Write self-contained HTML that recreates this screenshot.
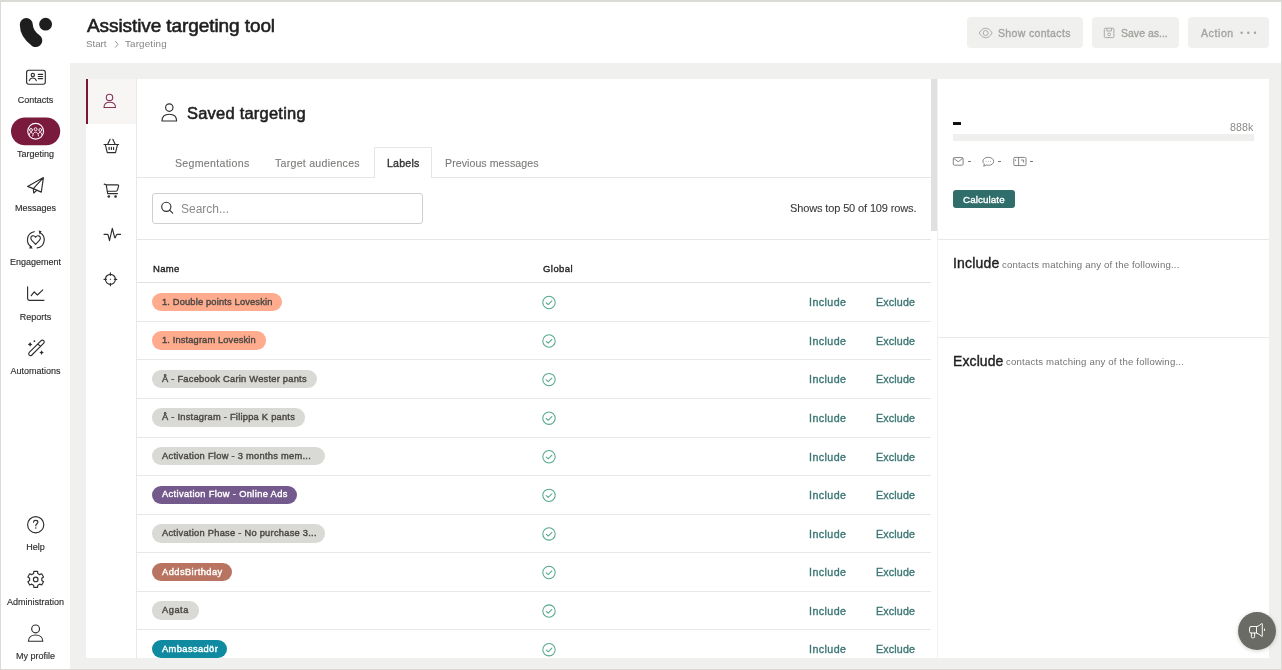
<!DOCTYPE html>
<html><head><meta charset="utf-8"><style>
*{box-sizing:border-box;margin:0;padding:0}
html,body{width:1282px;height:670px;overflow:hidden;background:#fff;font-family:"Liberation Sans",sans-serif;color:#222}
.a{position:absolute}
.t{position:absolute;white-space:nowrap;line-height:1;will-change:transform}
svg{position:absolute;overflow:visible}
.ic{fill:none;stroke:#2e2e2e;stroke-width:1.15;stroke-linecap:round;stroke-linejoin:round}
</style></head><body>
<div class="a" style="left:0;top:0;width:1282px;height:670px;border:1px solid #ddd9d4"></div>
<div class="a" style="left:1px;top:1px;width:1280px;height:1px;background:#d9d9d7"></div>
<div class="a" style="left:70px;top:63px;width:1211px;height:606px;background:#f0f0ee"></div>
<div class="a" style="left:86px;top:79px;width:1183px;height:579px;background:#fff"></div>
<svg style="left:0;top:0" width="70" height="62"><path d="M26.3,24.6 C26.3,31 30,36.5 35.8,40.6" fill="none" stroke="#1e1e1e" stroke-width="13" stroke-linecap="round"/><circle cx="45.6" cy="24.2" r="6.4" fill="#1e1e1e"/></svg>
<div class="t" style="left:86.60px;top:15.72px;font-size:19px;font-weight:400;color:#1f1f1f;letter-spacing:-0.087px;-webkit-text-stroke:0.6px #1f1f1f;">Assistive targeting tool</div>
<div class="t" style="left:86.00px;top:39.00px;font-size:9.8px;font-weight:400;color:#858583;letter-spacing:-0.050px;">Start</div>
<svg style="left:0;top:0" width="1" height="1"><path d="M115.2,41 L118,44.3 L115.2,47.6" fill="none" stroke="#8a8a88" stroke-width="0.9"/></svg>
<div class="t" style="left:125.10px;top:39.10px;font-size:9.8px;font-weight:400;color:#858583;letter-spacing:0.162px;">Targeting</div>
<div class="a" style="left:967px;top:17px;width:116px;height:31px;background:#f0f0ee;border-radius:4px"></div>
<div class="a" style="left:1092px;top:17px;width:87px;height:31px;background:#f0f0ee;border-radius:4px"></div>
<div class="a" style="left:1188px;top:17px;width:80.5px;height:31px;background:#f0f0ee;border-radius:4px"></div>
<div class="t" style="left:998.20px;top:27.61px;font-size:10.5px;font-weight:400;color:#a3a3a0;letter-spacing:0.342px;-webkit-text-stroke:0.35px #a3a3a0;">Show contacts</div>
<div class="t" style="left:1120.90px;top:27.61px;font-size:10.5px;font-weight:400;color:#a3a3a0;letter-spacing:0.011px;-webkit-text-stroke:0.35px #a3a3a0;">Save as...</div>
<div class="t" style="left:1201.00px;top:27.61px;font-size:10.5px;font-weight:400;color:#a3a3a0;letter-spacing:0.600px;-webkit-text-stroke:0.35px #a3a3a0;">Action</div>
<svg style="left:0;top:0" width="1" height="1"><path d="M979.3,33 C981,29.8 983.2,28.3 985.7,28.3 C988.2,28.3 990.4,29.8 992.1,33 C990.4,36.2 988.2,37.7 985.7,37.7 C983.2,37.7 981,36.2 979.3,33 Z" fill="none" stroke="#a3a3a0" stroke-width="0.9"/><circle cx="985.7" cy="33" r="2.5" fill="none" stroke="#a3a3a0" stroke-width="0.9"/></svg>
<svg style="left:0;top:0" width="1" height="1"><rect x="1104.3" y="28.2" width="9.6" height="9.4" rx="1" fill="none" stroke="#a3a3a0" stroke-width="0.9"/><path d="M1106.8,28.2 V31 H1111.4 V28.2" fill="none" stroke="#a3a3a0" stroke-width="0.9"/><circle cx="1109.1" cy="34.4" r="1.4" fill="none" stroke="#a3a3a0" stroke-width="0.9"/></svg>
<svg style="left:0;top:0" width="1" height="1"><circle cx="1241.6" cy="32.8" r="1.2" fill="#a3a3a0"/><circle cx="1248.3" cy="32.8" r="1.2" fill="#a3a3a0"/><circle cx="1255" cy="32.8" r="1.2" fill="#a3a3a0"/></svg>
<svg style="left:0;top:0" width="1" height="1"><rect x="26.6" y="70.2" width="18.7" height="14" rx="2.2" class="ic" stroke-width="1.2"/><circle cx="32.8" cy="75" r="1.65" class="ic" stroke-width="1.1"/><path d="M29.3,80.6 C29.9,78.9 31.2,78 32.8,78 C34.4,78 35.7,78.9 36.3,80.6" class="ic" stroke-width="1.1"/><path d="M38.3,74.4 H42.6 M38.3,76.5 H42.6 M38.3,78.6 H42.6" class="ic" stroke-width="1.0"/><rect x="11" y="117.4" width="49.2" height="27.9" rx="13.95" fill="#7a1b3e"/><circle cx="35.65" cy="131.25" r="7.9" fill="none" stroke="#fff" stroke-width="1.1"/><circle cx="31.0" cy="130.0" r="1.45" fill="none" stroke="#fff" stroke-width="0.95"/><circle cx="35.6" cy="129.2" r="1.45" fill="none" stroke="#fff" stroke-width="0.95"/><circle cx="40.3" cy="130.0" r="1.45" fill="none" stroke="#fff" stroke-width="0.95"/><path d="M29.2,135.4 C29.3,133.3 30,132.5 31.1,132.5 C31.9,132.5 32.5,132.9 32.8,133.6 M38.4,133.6 C38.7,132.9 39.3,132.5 40.2,132.5 C41.2,132.5 41.9,133.3 42,135.4 M32.7,136.4 C32.9,133.7 34,132.2 35.6,132.2 C37.2,132.2 38.3,133.7 38.5,136.4" fill="none" stroke="#fff" stroke-width="0.95"/><path d="M43.4,177.6 L27.6,186.4 L33.3,188.6 L41.3,192.1 Z M43.4,177.6 L33.3,188.6 L33.7,193 L36.8,190.4" class="ic" stroke-width="1.2"/><path d="M34.3,231.7 A8.2,8.2 0 0 0 31.6,246.9" class="ic" stroke-width="1.15"/><path d="M37.2,247.9 A8.2,8.2 0 0 0 40.1,232.7" class="ic" stroke-width="1.15"/><path d="M30.2,245.2 L32.8,248.4 L29.2,248.6 Z" fill="#2e2e2e"/><path d="M38.6,230.6 L41.6,231.3 L39.6,234.4 Z" fill="#2e2e2e"/><path d="M35.6,244.3 L31.8,240.4 C30.3,238.9 30.5,236.5 32.3,235.9 C33.7,235.4 34.9,236.2 35.6,237.3 C36.3,236.2 37.5,235.4 38.9,235.9 C40.7,236.5 40.9,238.9 39.4,240.4 Z" class="ic" stroke-width="1.15"/><path d="M27.6,286.8 V298.6 Q27.6,300.3 29.3,300.3 H44" class="ic" stroke-width="1.2"/><path d="M31.2,295.6 L34.2,291.8 L37.4,295 L42.8,289.9" class="ic" stroke-width="1.2"/><path d="M29.3,352.4 L40.9,340.8 Q42.3,339.4 43.6,340.7 Q44.9,342 43.5,343.4 L31.9,355 Q30.5,356.4 29.2,355.1 Q27.9,353.8 29.3,352.4 Z M37.8,343.9 L40.4,346.5" class="ic" stroke-width="1.1"/><path d="M30.1,342.09999999999997 Q30.6,343.9 32.4,344.4 Q30.6,344.9 30.1,346.7 Q29.6,344.9 27.8,344.4 Q29.6,343.9 30.1,342.09999999999997 Z M41.6,350.3 Q42.1,352.1 43.9,352.6 Q42.1,353.1 41.6,354.90000000000003 Q41.1,353.1 39.300000000000004,352.6 Q41.1,352.1 41.6,350.3 Z" fill="#2e2e2e"/><circle cx="34.4" cy="341.2" r="0.85" fill="#2e2e2e"/><circle cx="35.7" cy="524.7" r="8.1" class="ic" stroke-width="1.2"/><path d="M33.5,522.2 C33.6,520.9 34.5,520.3 35.7,520.3 C36.9,520.3 37.9,521 37.9,522.1 C37.9,523.6 35.8,524 35.8,525.8" class="ic" stroke-width="1.2"/><circle cx="35.8" cy="528.1" r="0.75" fill="#2e2e2e"/><path d="M33.86,571.41 L37.54,571.41 L37.82,573.57 L39.69,574.65 L41.70,573.81 L43.54,577.00 L41.81,578.32 L41.81,580.48 L43.54,581.80 L41.70,584.99 L39.69,584.15 L37.82,585.23 L37.54,587.39 L33.86,587.39 L33.58,585.23 L31.71,584.15 L29.70,584.99 L27.86,581.80 L29.59,580.48 L29.59,578.32 L27.86,577.00 L29.70,573.81 L31.71,574.65 L33.58,573.57 Z" class="ic" stroke-width="1.15"/><circle cx="35.7" cy="579.4" r="2.3" class="ic" stroke-width="1.15"/><circle cx="35.6" cy="628.9" r="3.9" class="ic" stroke-width="1.2"/><path d="M28.4,641.2 C28.4,637.3 31.5,635 35.6,635 C39.7,635 42.8,637.3 42.8,641.2 Z" class="ic" stroke-width="1.2"/></svg>
<div class="t" style="left:0;width:71px;text-align:center;top:95.88px;font-size:9px;color:#2e2e2e;-webkit-text-stroke:0.15px #2e2e2e">Contacts</div>
<div class="t" style="left:0;width:71px;text-align:center;top:150.08px;font-size:9px;color:#2e2e2e;-webkit-text-stroke:0.15px #2e2e2e">Targeting</div>
<div class="t" style="left:0;width:71px;text-align:center;top:204.28px;font-size:9px;color:#2e2e2e;-webkit-text-stroke:0.15px #2e2e2e">Messages</div>
<div class="t" style="left:0;width:71px;text-align:center;top:258.48px;font-size:9px;color:#2e2e2e;-webkit-text-stroke:0.15px #2e2e2e">Engagement</div>
<div class="t" style="left:0;width:71px;text-align:center;top:312.68px;font-size:9px;color:#2e2e2e;-webkit-text-stroke:0.15px #2e2e2e">Reports</div>
<div class="t" style="left:0;width:71px;text-align:center;top:366.68px;font-size:9px;color:#2e2e2e;-webkit-text-stroke:0.15px #2e2e2e">Automations</div>
<div class="t" style="left:0;width:71px;text-align:center;top:543.38px;font-size:9px;color:#2e2e2e;-webkit-text-stroke:0.15px #2e2e2e">Help</div>
<div class="t" style="left:0;width:71px;text-align:center;top:597.78px;font-size:9px;color:#2e2e2e;-webkit-text-stroke:0.15px #2e2e2e">Administration</div>
<div class="t" style="left:0;width:71px;text-align:center;top:652.08px;font-size:9px;color:#2e2e2e;-webkit-text-stroke:0.15px #2e2e2e">My profile</div>
<div class="a" style="left:136px;top:79px;width:1px;height:579px;background:#e9e9e7"></div>
<div class="a" style="left:88px;top:79px;width:48px;height:45px;background:#f7f6f4"></div>
<div class="a" style="left:86px;top:79px;width:2.4px;height:45px;background:#78163c"></div>
<svg style="left:0;top:0" width="1" height="1"><circle cx="109.5" cy="97.4" r="3.2" fill="none" stroke="#86345a" stroke-width="1.1"/><path d="M104,107.5 C104,104 106.3,102.3 109.7,102.3 C113.1,102.3 115.5,104 115.5,107.5 Z" fill="none" stroke="#86345a" stroke-width="1.1" stroke-linejoin="round"/><path d="M104,144.5 H118.6 M105.3,144.6 L107.3,152.6 H115.5 L117.5,144.6 M107.6,144.4 L110.1,139.3 M115.3,144.4 L112.8,139.3 M109.1,147.3 V149.5 M111.4,147.3 V149.5 M113.6,147.3 V149.5" class="ic" stroke-width="1.1"/><path d="M104.2,184.1 L106.2,184.8 L107.7,193.6 H117.5 M106.3,184.9 H117.6 Q118.9,184.9 118.6,186.2 L117.4,190.2 Q117.1,191.2 116.1,191.2 H107.2" class="ic" stroke-width="1.1"/><circle cx="108.8" cy="196.5" r="1.35" fill="#333"/><circle cx="115.6" cy="196.5" r="1.35" fill="#333"/><path d="M104,234.3 H107.3 Q107.9,234.3 108.1,235 L109.5,240.6 L112.3,228.4 L114.7,237.5 Q115.1,238.4 115.7,236.7 Q116.2,234.3 117.3,234.3 H120.6" class="ic" stroke-width="1.15"/><circle cx="110.4" cy="279.3" r="5" class="ic" stroke-width="1.1"/><path d="M110.4,272.9 V275.3 M110.4,283.3 V285.7 M104,279.3 H106.4 M114.4,279.3 H116.8" class="ic" stroke-width="1.1"/><circle cx="110.4" cy="279.3" r="0.6" fill="#333"/></svg>
<svg style="left:0;top:0" width="1" height="1"><circle cx="169.3" cy="107.6" r="3.7" class="ic" stroke-width="1.15"/><path d="M162,121 C162,116.6 165,114.2 169.3,114.2 C173.6,114.2 176.6,116.6 176.6,121 Z" class="ic" stroke-width="1.15"/></svg>
<div class="t" style="left:186.90px;top:105.43px;font-size:16.5px;font-weight:400;color:#1f1f1f;letter-spacing:0.214px;-webkit-text-stroke:0.55px #1f1f1f;">Saved targeting</div>
<div class="a" style="left:137px;top:177px;width:794px;height:1px;background:#e6e6e4"></div>
<div class="a" style="left:374px;top:147px;width:58px;height:31px;background:#fff;border:1px solid #e6e6e4;border-bottom:none"></div>
<div class="t" style="left:175.00px;top:158.13px;font-size:10.6px;font-weight:400;color:#7a7a78;letter-spacing:0.292px;-webkit-text-stroke:0.1px #7a7a78;">Segmentations</div>
<div class="t" style="left:275.30px;top:158.13px;font-size:10.6px;font-weight:400;color:#7a7a78;letter-spacing:0.260px;-webkit-text-stroke:0.1px #7a7a78;">Target audiences</div>
<div class="t" style="left:386.70px;top:158.13px;font-size:10.6px;font-weight:400;color:#333;letter-spacing:0.220px;-webkit-text-stroke:0.35px #333;">Labels</div>
<div class="t" style="left:445.40px;top:158.13px;font-size:10.6px;font-weight:400;color:#7a7a78;letter-spacing:0.062px;-webkit-text-stroke:0.1px #7a7a78;">Previous messages</div>
<div class="a" style="left:152px;top:193px;width:271px;height:31px;border:1px solid #cfcfcc;border-radius:3px"></div>
<svg style="left:0;top:0" width="1" height="1"><circle cx="166.3" cy="206.8" r="4.6" class="ic" stroke-width="1.15"/><path d="M169.6,210.1 L172.7,213.2" class="ic" stroke-width="1.15"/></svg>
<div class="t" style="left:181.20px;top:202.94px;font-size:12px;font-weight:400;color:#8a8a88;letter-spacing:0.000px;">Search...</div>
<div class="t" style="left:789.60px;top:203.19px;font-size:11px;font-weight:400;color:#3a3a3a;letter-spacing:-0.129px;-webkit-text-stroke:0.1px #3a3a3a;">Shows top 50 of 109 rows.</div>
<div class="a" style="left:931px;top:79px;width:6px;height:152px;background:#e0e0df"></div>
<div class="a" style="left:937px;top:79px;width:1px;height:579px;background:#f0f0ee"></div>
<div class="a" style="left:137px;top:239px;width:794px;height:1px;background:#e6e6e4"></div>
<div class="t" style="left:152.80px;top:264.26px;font-size:9.5px;font-weight:400;color:#222;letter-spacing:0.300px;-webkit-text-stroke:0.35px #222;">Name</div>
<div class="t" style="left:542.80px;top:264.26px;font-size:9.5px;font-weight:400;color:#222;letter-spacing:0.440px;-webkit-text-stroke:0.35px #222;">Global</div>
<div class="a" style="left:137px;top:282px;width:794px;height:1px;background:#e2e2e0"></div>
<div class="a" style="left:152.2px;top:292.60px;width:129.60px;height:18.5px;border-radius:9.25px;background:#ffab8e"></div>
<div class="t" style="left:162.20px;top:297.58px;font-size:9.3px;font-weight:400;color:#4b4843;letter-spacing:0.163px;-webkit-text-stroke:0.4px #4b4843;">1. Double points Loveskin</div>
<svg style="left:0;top:0" width="1" height="1"><circle cx="549" cy="302.45" r="6.2" fill="none" stroke="#55a88e" stroke-width="1.05"/><path d="M546.2,302.75 L548.2,304.55 L551.9,300.85" fill="none" stroke="#55a88e" stroke-width="1.05" stroke-linecap="round" stroke-linejoin="round"/></svg>
<div class="t" style="left:808.60px;top:297.19px;font-size:10.7px;font-weight:400;color:#3b7673;letter-spacing:0.433px;-webkit-text-stroke:0.35px #3b7673;">Include</div>
<div class="t" style="left:875.80px;top:297.19px;font-size:10.7px;font-weight:400;color:#3b7673;letter-spacing:0.150px;-webkit-text-stroke:0.35px #3b7673;">Exclude</div>
<div class="a" style="left:137px;top:321px;width:794px;height:1px;background:#e8e8e6"></div>
<div class="a" style="left:152.2px;top:331.18px;width:113.70px;height:18.5px;border-radius:9.25px;background:#ffab8e"></div>
<div class="t" style="left:162.20px;top:336.16px;font-size:9.3px;font-weight:400;color:#4b4843;letter-spacing:0.135px;-webkit-text-stroke:0.4px #4b4843;">1. Instagram Loveskin</div>
<svg style="left:0;top:0" width="1" height="1"><circle cx="549" cy="341.03" r="6.2" fill="none" stroke="#55a88e" stroke-width="1.05"/><path d="M546.2,341.33 L548.2,343.13 L551.9,339.43" fill="none" stroke="#55a88e" stroke-width="1.05" stroke-linecap="round" stroke-linejoin="round"/></svg>
<div class="t" style="left:808.60px;top:335.77px;font-size:10.7px;font-weight:400;color:#3b7673;letter-spacing:0.433px;-webkit-text-stroke:0.35px #3b7673;">Include</div>
<div class="t" style="left:875.80px;top:335.77px;font-size:10.7px;font-weight:400;color:#3b7673;letter-spacing:0.150px;-webkit-text-stroke:0.35px #3b7673;">Exclude</div>
<div class="a" style="left:137px;top:359px;width:794px;height:1px;background:#e8e8e6"></div>
<div class="a" style="left:152.2px;top:369.76px;width:164.70px;height:18.5px;border-radius:9.25px;background:#d9d9d5"></div>
<div class="t" style="left:162.20px;top:374.74px;font-size:9.3px;font-weight:400;color:#4b4843;letter-spacing:0.243px;-webkit-text-stroke:0.4px #4b4843;">Å - Facebook Carin Wester pants</div>
<svg style="left:0;top:0" width="1" height="1"><circle cx="549" cy="379.61" r="6.2" fill="none" stroke="#55a88e" stroke-width="1.05"/><path d="M546.2,379.91 L548.2,381.71 L551.9,378.01" fill="none" stroke="#55a88e" stroke-width="1.05" stroke-linecap="round" stroke-linejoin="round"/></svg>
<div class="t" style="left:808.60px;top:374.35px;font-size:10.7px;font-weight:400;color:#3b7673;letter-spacing:0.433px;-webkit-text-stroke:0.35px #3b7673;">Include</div>
<div class="t" style="left:875.80px;top:374.35px;font-size:10.7px;font-weight:400;color:#3b7673;letter-spacing:0.150px;-webkit-text-stroke:0.35px #3b7673;">Exclude</div>
<div class="a" style="left:137px;top:398px;width:794px;height:1px;background:#e8e8e6"></div>
<div class="a" style="left:152.2px;top:408.34px;width:152.60px;height:18.5px;border-radius:9.25px;background:#d9d9d5"></div>
<div class="t" style="left:162.20px;top:413.32px;font-size:9.3px;font-weight:400;color:#4b4843;letter-spacing:0.243px;-webkit-text-stroke:0.4px #4b4843;">Å - Instagram - Filippa K pants</div>
<svg style="left:0;top:0" width="1" height="1"><circle cx="549" cy="418.19" r="6.2" fill="none" stroke="#55a88e" stroke-width="1.05"/><path d="M546.2,418.49 L548.2,420.29 L551.9,416.59" fill="none" stroke="#55a88e" stroke-width="1.05" stroke-linecap="round" stroke-linejoin="round"/></svg>
<div class="t" style="left:808.60px;top:412.93px;font-size:10.7px;font-weight:400;color:#3b7673;letter-spacing:0.433px;-webkit-text-stroke:0.35px #3b7673;">Include</div>
<div class="t" style="left:875.80px;top:412.93px;font-size:10.7px;font-weight:400;color:#3b7673;letter-spacing:0.150px;-webkit-text-stroke:0.35px #3b7673;">Exclude</div>
<div class="a" style="left:137px;top:437px;width:794px;height:1px;background:#e8e8e6"></div>
<div class="a" style="left:152.2px;top:446.92px;width:172.90px;height:18.5px;border-radius:9.25px;background:#d9d9d5"></div>
<div class="t" style="left:162.20px;top:451.90px;font-size:9.3px;font-weight:400;color:#4b4843;letter-spacing:0.275px;-webkit-text-stroke:0.4px #4b4843;">Activation Flow - 3 months mem...</div>
<svg style="left:0;top:0" width="1" height="1"><circle cx="549" cy="456.77" r="6.2" fill="none" stroke="#55a88e" stroke-width="1.05"/><path d="M546.2,457.07 L548.2,458.87 L551.9,455.17" fill="none" stroke="#55a88e" stroke-width="1.05" stroke-linecap="round" stroke-linejoin="round"/></svg>
<div class="t" style="left:808.60px;top:451.51px;font-size:10.7px;font-weight:400;color:#3b7673;letter-spacing:0.433px;-webkit-text-stroke:0.35px #3b7673;">Include</div>
<div class="t" style="left:875.80px;top:451.51px;font-size:10.7px;font-weight:400;color:#3b7673;letter-spacing:0.150px;-webkit-text-stroke:0.35px #3b7673;">Exclude</div>
<div class="a" style="left:137px;top:475px;width:794px;height:1px;background:#e8e8e6"></div>
<div class="a" style="left:152.2px;top:485.50px;width:144.70px;height:18.5px;border-radius:9.25px;background:#745a8c"></div>
<div class="t" style="left:162.20px;top:490.48px;font-size:9.3px;font-weight:400;color:#fff;letter-spacing:0.356px;-webkit-text-stroke:0.4px #fff;">Activation Flow - Online Ads</div>
<svg style="left:0;top:0" width="1" height="1"><circle cx="549" cy="495.35" r="6.2" fill="none" stroke="#55a88e" stroke-width="1.05"/><path d="M546.2,495.65 L548.2,497.45 L551.9,493.75" fill="none" stroke="#55a88e" stroke-width="1.05" stroke-linecap="round" stroke-linejoin="round"/></svg>
<div class="t" style="left:808.60px;top:490.09px;font-size:10.7px;font-weight:400;color:#3b7673;letter-spacing:0.433px;-webkit-text-stroke:0.35px #3b7673;">Include</div>
<div class="t" style="left:875.80px;top:490.09px;font-size:10.7px;font-weight:400;color:#3b7673;letter-spacing:0.150px;-webkit-text-stroke:0.35px #3b7673;">Exclude</div>
<div class="a" style="left:137px;top:514px;width:794px;height:1px;background:#e8e8e6"></div>
<div class="a" style="left:152.2px;top:524.08px;width:172.90px;height:18.5px;border-radius:9.25px;background:#d9d9d5"></div>
<div class="t" style="left:162.20px;top:529.06px;font-size:9.3px;font-weight:400;color:#4b4843;letter-spacing:0.259px;-webkit-text-stroke:0.4px #4b4843;">Activation Phase - No purchase 3...</div>
<svg style="left:0;top:0" width="1" height="1"><circle cx="549" cy="533.93" r="6.2" fill="none" stroke="#55a88e" stroke-width="1.05"/><path d="M546.2,534.23 L548.2,536.03 L551.9,532.33" fill="none" stroke="#55a88e" stroke-width="1.05" stroke-linecap="round" stroke-linejoin="round"/></svg>
<div class="t" style="left:808.60px;top:528.67px;font-size:10.7px;font-weight:400;color:#3b7673;letter-spacing:0.433px;-webkit-text-stroke:0.35px #3b7673;">Include</div>
<div class="t" style="left:875.80px;top:528.67px;font-size:10.7px;font-weight:400;color:#3b7673;letter-spacing:0.150px;-webkit-text-stroke:0.35px #3b7673;">Exclude</div>
<div class="a" style="left:137px;top:552px;width:794px;height:1px;background:#e8e8e6"></div>
<div class="a" style="left:152.2px;top:562.66px;width:80.20px;height:18.5px;border-radius:9.25px;background:#b87461"></div>
<div class="t" style="left:162.20px;top:567.64px;font-size:9.3px;font-weight:400;color:#fff;letter-spacing:0.445px;-webkit-text-stroke:0.4px #fff;">AddsBirthday</div>
<svg style="left:0;top:0" width="1" height="1"><circle cx="549" cy="572.51" r="6.2" fill="none" stroke="#55a88e" stroke-width="1.05"/><path d="M546.2,572.81 L548.2,574.61 L551.9,570.91" fill="none" stroke="#55a88e" stroke-width="1.05" stroke-linecap="round" stroke-linejoin="round"/></svg>
<div class="t" style="left:808.60px;top:567.25px;font-size:10.7px;font-weight:400;color:#3b7673;letter-spacing:0.433px;-webkit-text-stroke:0.35px #3b7673;">Include</div>
<div class="t" style="left:875.80px;top:567.25px;font-size:10.7px;font-weight:400;color:#3b7673;letter-spacing:0.150px;-webkit-text-stroke:0.35px #3b7673;">Exclude</div>
<div class="a" style="left:137px;top:591px;width:794px;height:1px;background:#e8e8e6"></div>
<div class="a" style="left:152.2px;top:601.24px;width:46.50px;height:18.5px;border-radius:9.25px;background:#d9d9d5"></div>
<div class="t" style="left:162.20px;top:606.22px;font-size:9.3px;font-weight:400;color:#4b4843;letter-spacing:0.525px;-webkit-text-stroke:0.4px #4b4843;">Agata</div>
<svg style="left:0;top:0" width="1" height="1"><circle cx="549" cy="611.09" r="6.2" fill="none" stroke="#55a88e" stroke-width="1.05"/><path d="M546.2,611.39 L548.2,613.19 L551.9,609.49" fill="none" stroke="#55a88e" stroke-width="1.05" stroke-linecap="round" stroke-linejoin="round"/></svg>
<div class="t" style="left:808.60px;top:605.83px;font-size:10.7px;font-weight:400;color:#3b7673;letter-spacing:0.433px;-webkit-text-stroke:0.35px #3b7673;">Include</div>
<div class="t" style="left:875.80px;top:605.83px;font-size:10.7px;font-weight:400;color:#3b7673;letter-spacing:0.150px;-webkit-text-stroke:0.35px #3b7673;">Exclude</div>
<div class="a" style="left:137px;top:629px;width:794px;height:1px;background:#e8e8e6"></div>
<div class="a" style="left:152.2px;top:639.82px;width:74.90px;height:18.5px;border-radius:9.25px;background:#0f8aa0"></div>
<div class="t" style="left:162.20px;top:644.80px;font-size:9.3px;font-weight:400;color:#fff;letter-spacing:0.400px;-webkit-text-stroke:0.4px #fff;">Ambassadör</div>
<svg style="left:0;top:0" width="1" height="1"><circle cx="549" cy="649.67" r="6.2" fill="none" stroke="#55a88e" stroke-width="1.05"/><path d="M546.2,649.97 L548.2,651.77 L551.9,648.07" fill="none" stroke="#55a88e" stroke-width="1.05" stroke-linecap="round" stroke-linejoin="round"/></svg>
<div class="t" style="left:808.60px;top:644.41px;font-size:10.7px;font-weight:400;color:#3b7673;letter-spacing:0.433px;-webkit-text-stroke:0.35px #3b7673;">Include</div>
<div class="t" style="left:875.80px;top:644.41px;font-size:10.7px;font-weight:400;color:#3b7673;letter-spacing:0.150px;-webkit-text-stroke:0.35px #3b7673;">Exclude</div>
<div class="a" style="left:953.3px;top:122px;width:7.4px;height:2.6px;background:#111"></div>
<div class="t" style="left:1229.60px;top:122.03px;font-size:10.6px;font-weight:400;color:#888886;letter-spacing:0.133px;">888k</div>
<div class="a" style="left:953px;top:134px;width:300.5px;height:6.5px;background:#efefed"></div>
<svg style="left:0;top:0" width="1" height="1"><rect x="953.3" y="157.6" width="9.8" height="7.6" rx="1" fill="none" stroke="#777" stroke-width="0.9"/><path d="M953.6,158.3 L958.2,161.8 L962.8,158.3" fill="none" stroke="#777" stroke-width="0.9"/><path d="M988.3,157.3 C991.6,157.3 993.7,159.2 993.7,161.3 C993.7,163.5 991.6,165.3 988.3,165.3 C987.6,165.3 987,165.2 986.4,165 L983.7,166.2 L984.4,164 C983.4,163.2 982.9,162.3 982.9,161.3 C982.9,159.2 985,157.3 988.3,157.3 Z" fill="none" stroke="#777" stroke-width="0.9"/><circle cx="986" cy="161.3" r="0.45" fill="#777"/><circle cx="988.3" cy="161.3" r="0.45" fill="#777"/><circle cx="990.6" cy="161.3" r="0.45" fill="#777"/><rect x="1013.8" y="157.4" width="12.2" height="8.2" rx="1.2" fill="none" stroke="#777" stroke-width="0.9"/><path d="M1018.6,157.4 V165.6 M1015.6,159.5 V161 M1021,160 H1023.6 V162.6" fill="none" stroke="#777" stroke-width="0.9"/></svg>
<div class="a" style="left:967.6px;top:161.3px;width:3px;height:0.9px;background:#777"></div>
<div class="a" style="left:998px;top:161.3px;width:3px;height:0.9px;background:#777"></div>
<div class="a" style="left:1030.3px;top:161.3px;width:3px;height:0.9px;background:#777"></div>
<div class="a" style="left:952.7px;top:189.7px;width:62.1px;height:18.5px;border-radius:3px;background:#2f6e6b"></div>
<div class="t" style="left:962.90px;top:195.40px;font-size:9.8px;font-weight:400;color:#fff;letter-spacing:0.100px;-webkit-text-stroke:0.35px #fff;">Calculate</div>
<div class="a" style="left:938px;top:239px;width:331px;height:1px;background:#e8e8e6"></div>
<div class="t" style="left:953.30px;top:256.45px;font-size:14px;font-weight:400;color:#1f1f1f;letter-spacing:0.183px;-webkit-text-stroke:0.4px #1f1f1f;">Include</div>
<div class="t" style="left:1002.30px;top:259.57px;font-size:9.6px;font-weight:400;color:#737371;letter-spacing:0.180px;">contacts matching any of the following...</div>
<div class="a" style="left:938px;top:337px;width:331px;height:1px;background:#e8e8e6"></div>
<div class="t" style="left:953.30px;top:354.05px;font-size:14px;font-weight:400;color:#1f1f1f;letter-spacing:0.100px;-webkit-text-stroke:0.4px #1f1f1f;">Exclude</div>
<div class="t" style="left:1006.30px;top:357.17px;font-size:9.6px;font-weight:400;color:#737371;letter-spacing:0.192px;">contacts matching any of the following...</div>
<div class="a" style="left:1237.7px;top:611.6px;width:38.6px;height:38.6px;border-radius:50%;background:#6b6b65;box-shadow:0 1px 4px rgba(0,0,0,0.18)"></div>
<svg style="left:0;top:0" width="1" height="1"><path d="M1251,626.5 H1256.5 V633 H1251 Q1249.5,633 1249.5,631.5 V628 Q1249.5,626.5 1251,626.5 Z M1256.5,626.7 Q1259.3,626.1 1261.6,623.7 Q1262.3,623.1 1262.3,624 V636 Q1262.3,636.9 1261.6,636.3 Q1259.3,633.9 1256.5,633 M1251.4,633 V636.8 Q1251.4,637.8 1252.4,637.8 H1253.6 Q1254.6,637.8 1254.6,636.8 V633 M1264.5,629 V630.5" fill="none" stroke="#fff" stroke-width="0.95" stroke-linejoin="round" stroke-linecap="round"/></svg>
</body></html>
